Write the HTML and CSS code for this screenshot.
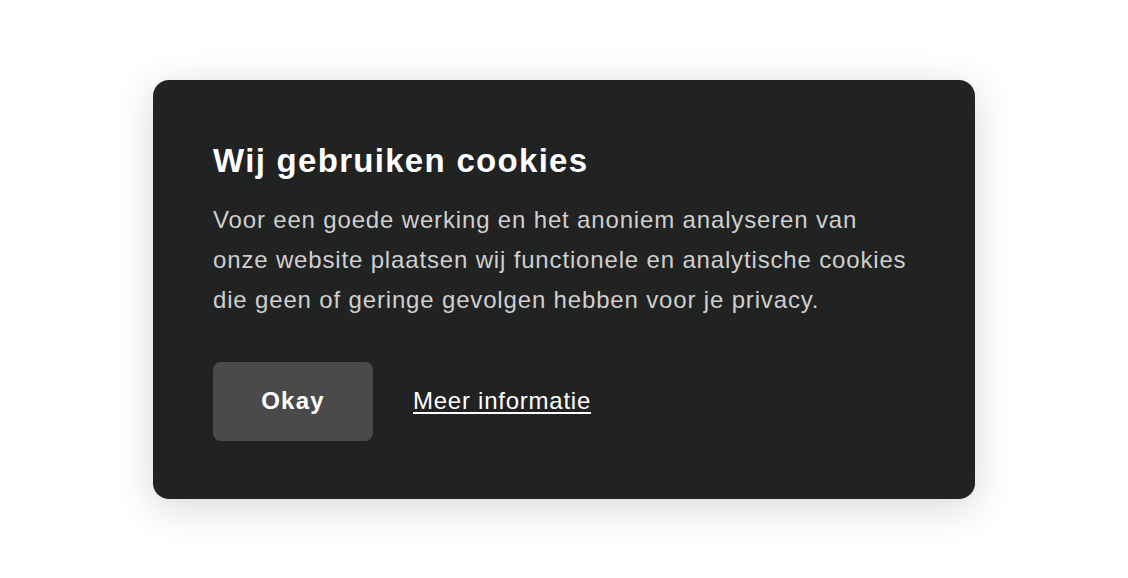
FILE: index.html
```html
<!DOCTYPE html>
<html lang="nl">
<head>
    <meta charset="UTF-8">
    <meta name="viewport" content="width=device-width, initial-scale=1.0">
    <title>Cookies</title>
    <link rel="stylesheet" href="styles.css">
</head>
<body>
    <div class="page">
        <div class="cookie-card">
            <h2 class="cookie-title">Wij gebruiken cookies</h2>
            <p class="cookie-text">Voor een goede werking en het anoniem analyseren van onze website plaatsen wij functionele en analytische cookies die geen of geringe gevolgen hebben voor je privacy.</p>
            <div class="cookie-actions">
                <button class="okay">Okay</button>
                <a class="more" href="#">Meer informatie</a>
            </div>
        </div>
    </div>
</body>
</html>
```

FILE: styles.css
```css
body{
    margin: 0;
    padding: 0;
    background-color: white;
    font-family: "Liberation Sans", Arial, Helvetica, sans-serif;
}
.page{
    height: 100vh;
    display: flex;
    align-items: center;
    justify-content: center;
}
.cookie-card{
    width: 822px;
    box-sizing: border-box;
    padding: 60px 60px 58px 60px;
    background-color: #212222;
    border-radius: 16px;
    box-shadow: 0 8px 40px rgba(0, 0, 0, 0.16);
}
.cookie-title{
    margin: 0 0 18px 0;
    font-size: 33px;
    line-height: 42px;
    font-weight: bold;
    letter-spacing: 1.3px;
    color: white;
}
.cookie-text{
    margin: 0;
    max-width: 700px;
    font-size: 24px;
    line-height: 40px;
    letter-spacing: 0.84px;
    color: #cfcfcf;
}
.cookie-actions{
    margin-top: 42px;
    display: flex;
    align-items: center;
    gap: 40px;
}
.okay{
    width: 160px;
    height: 79px;
    border: none;
    border-radius: 8px;
    background-color: #4a4a4a;
    color: white;
    font-family: inherit;
    font-size: 24px;
    font-weight: bold;
    letter-spacing: 1.2px;
    cursor: pointer;
}
.more{
    color: white;
    font-size: 24px;
    letter-spacing: 0.75px;
    text-decoration: underline;
    text-underline-offset: 3px;
}
```
